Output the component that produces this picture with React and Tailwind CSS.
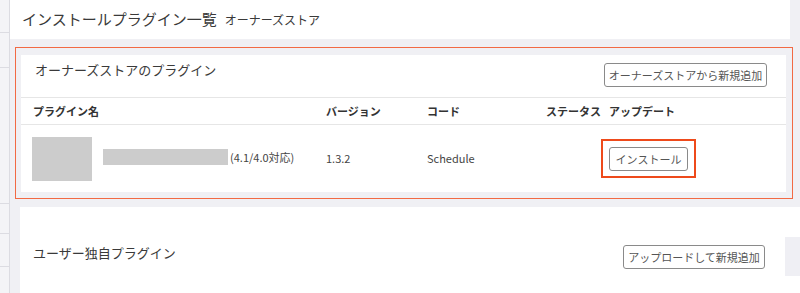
export default function App() {
  const font = { fontFamily: '"Noto Sans CJK JP", "Noto Sans", sans-serif' };
  return (
    <div
      className="w-[800px] h-[293px] overflow-hidden flex bg-[#f0f0f4] text-[#3a3a3a]"
      style={font}
    >
      {/* left sidebar strip */}
      <div className="w-[10px] shrink-0 flex flex-col bg-[#f4f4f7] border-r border-[#dcdce2]">
        <div className="h-[33px] border-b border-[#dcdce2]" />
        <div className="h-[35px] border-b border-[#dcdce2]" />
        <div className="h-[136px] border-b border-[#dcdce2]" />
        <div className="h-[30px] border-b border-[#dcdce2]" />
        <div className="h-[33px] border-b border-[#dcdce2]" />
      </div>

      {/* main */}
      <div className="flex-1 flex flex-col">
        {/* page header */}
        <div className="h-[39px] shrink-0 bg-white mr-[10px] flex items-baseline pl-[12px] pt-[9px]">
          <span className="text-[15px] leading-[20px] text-[#3a3a3a]">インストールプラグイン一覧</span>
          <span className="ml-[8px] text-[12px] leading-[20px] text-[#3a3a3a]">オーナーズストア</span>
        </div>

        {/* highlighted owner store box */}
        <div className="mt-[8px] ml-[5px] mr-[7px] h-[152px] shrink-0 border border-[#f26a44] pt-[7px] pl-[5px] pr-[6px] pb-[6px] flex flex-col">
          <div className="flex-1 bg-white flex flex-col">
            {/* panel header */}
            <div className="h-[43px] shrink-0 border-b border-[#e6e6e6] flex justify-between items-start pl-[14px] pr-[19px]">
              <span className="mt-[6px] text-[13px] leading-[18px] text-[#3a3a3a]">オーナーズストアのプラグイン</span>
              <button className="mt-[8px] w-[163px] h-[24px] border border-[#8a8a8a] rounded-[3px] bg-white text-[11px] leading-[16px] text-[#555] flex items-center justify-center">
                オーナーズストアから新規追加
              </button>
            </div>
            {/* table header */}
            <div className="h-[27px] shrink-0 border-b border-[#e6e6e6] grid grid-cols-[293px_101px_119px_63px_1fr] items-center pl-[12px] text-[11px] font-bold text-[#333]">
              <span>プラグイン名</span>
              <span>バージョン</span>
              <span>コード</span>
              <span>ステータス</span>
              <span>アップデート</span>
            </div>
            {/* data row */}
            <div className="flex-1 grid grid-cols-[293px_101px_119px_63px_1fr] items-center pl-[11px] text-[11px] text-[#444]">
              <div className="flex items-center">
                <div className="w-[60px] h-[44px] bg-[#cccccc]" />
                <div className="ml-[11px] w-[125px] h-[16px] bg-[#cccccc] -mt-[3px]" />
                <span className="ml-[2px] -mt-[2px] text-[11px] text-[#444]">(4.1/4.0対応)</span>
              </div>
              <span className="pl-[1px] text-[11px]">1.3.2</span>
              <span className="pl-[1px]">Schedule</span>
              <span />
              <div className="-ml-[7px] flex">
                <div className="w-[95px] h-[39px] border-2 border-[#ee4a1b] flex items-center pl-[6px]">
                  <button className="w-[79px] h-[24px] border border-[#8a8a8a] rounded-[3px] bg-white text-[11px] leading-[16px] text-[#555] flex items-center justify-center">
                    インストール
                  </button>
                </div>
              </div>
            </div>
          </div>
        </div>

        {/* user plugins panel */}
        <div className="mt-[8px] ml-[10px] flex-1 bg-white flex flex-col">
          <div className="mt-[30px] h-[39px] flex items-center">
            <span className="self-start mt-[7px] ml-[13px] text-[13px] leading-[18px] text-[#3a3a3a]">ユーザー独自プラグイン</span>
            <div className="flex-1" />
            <button className="w-[142px] h-[24px] border border-[#8a8a8a] rounded-[3px] bg-white text-[11px] leading-[16px] text-[#555] flex items-center justify-center">
              アップロードして新規追加
            </button>
            <div className="ml-[20px] w-[15px] h-[39px] bg-[#efeff4]" />
          </div>
        </div>
      </div>
    </div>
  );
}
